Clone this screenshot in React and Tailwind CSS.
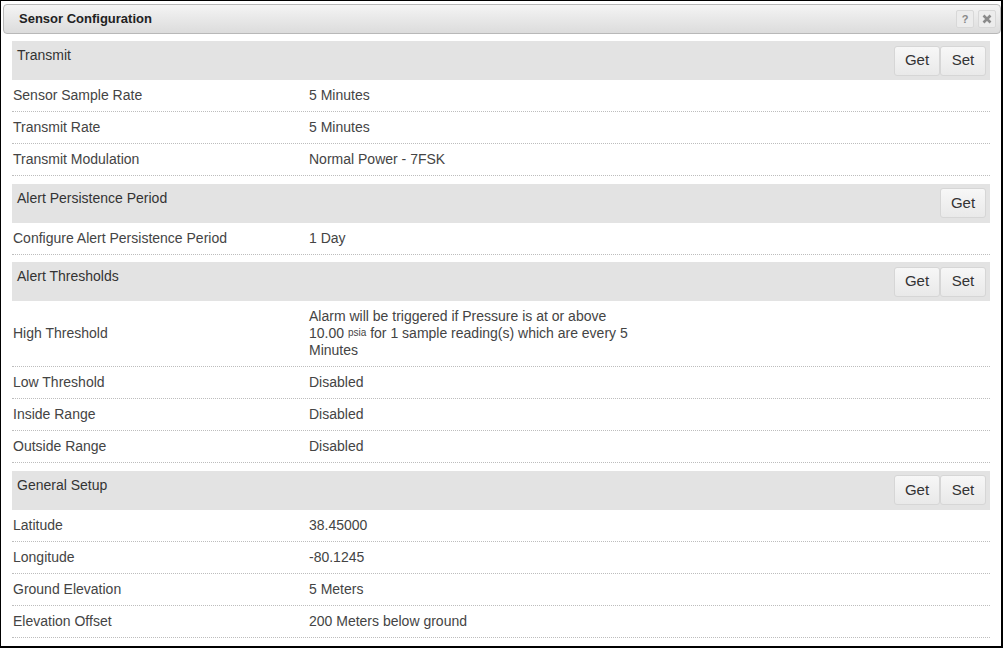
import React from "react";

const sections = [
  {
    title: "Transmit",
    actions: ["Get", "Set"],
    rows: [
      ["Sensor Sample Rate", "5 Minutes"],
      ["Transmit Rate", "5 Minutes"],
      ["Transmit Modulation", "Normal Power - 7FSK"],
    ],
  },
  {
    title: "Alert Persistence Period",
    actions: ["Get"],
    rows: [["Configure Alert Persistence Period", "1 Day"]],
  },
  {
    title: "Alert Thresholds",
    actions: ["Get", "Set"],
    rows: [
      [
        "High Threshold",
        <>
          Alarm will be triggered if Pressure is at or above 10.00{" "}
          <span className="align-[2px] text-[10px] leading-none">psia</span> for 1 sample
          reading(s) which are every 5 Minutes
        </>,
      ],
      ["Low Threshold", "Disabled"],
      ["Inside Range", "Disabled"],
      ["Outside Range", "Disabled"],
    ],
  },
  {
    title: "General Setup",
    actions: ["Get", "Set"],
    rows: [
      ["Latitude", "38.45000"],
      ["Longitude", "-80.1245"],
      ["Ground Elevation", "5 Meters"],
      ["Elevation Offset", "200 Meters below ground"],
    ],
  },
];

function Btn({ children }) {
  return (
    <button className="h-[30px] w-[46px] rounded-[3px] border border-[#d6d6d6] bg-gradient-to-b from-[#f7f7f7] to-[#e9e9e9] text-[15px] text-[#333]">
      {children}
    </button>
  );
}

export default function App() {
  return (
    <div
      className="h-[648px] w-[1003px] border-t border-l border-r-2 border-b-2 border-black bg-white pt-[3px] pl-[2px] pr-0 text-[14px] text-[#444]"
      style={{ fontFamily: '"Liberation Sans", Arial, sans-serif' }}
    >
      {/* title bar */}
      <div className="flex h-[30px] items-center justify-between rounded-[4px] border border-[#b8b8b8] bg-gradient-to-b from-[#f4f4f4] to-[#dcdcdc] pl-[15px] pr-[4px]">
        <span className="text-[13px] font-bold text-[#222]">Sensor Configuration</span>
        <div className="flex gap-[4px]">
          <span className="flex h-[18px] w-[18px] items-center justify-center rounded-[2px] border border-[#d8d8d8] bg-[#ececec] text-[11px] font-bold text-[#888]">
            ?
          </span>
          <span className="flex h-[18px] w-[18px] items-center justify-center rounded-[2px] border border-[#d8d8d8] bg-[#ececec] text-[#888]">
            <svg width="10" height="10" viewBox="0 0 10 10">
              <path d="M1.5 1.5 L8.5 8.5 M8.5 1.5 L1.5 8.5" stroke="#8a8a8a" strokeWidth="2.6" />
            </svg>
          </span>
        </div>
      </div>

      <div className="pl-[9px] pr-[11px] pt-[7px]">
        {sections.map((s, i) => (
          <div key={s.title} className={i > 0 ? "mt-[7.5px]" : ""}>
            <div className="flex h-[39px] justify-between bg-[#e3e3e3] pl-[5px] pr-[4px]">
              <span className="pt-[6px] text-[14px] leading-[17px] text-[#333]">{s.title}</span>
              <div className="flex items-center">
                {s.actions.map((a) => (
                  <Btn key={a}>{a}</Btn>
                ))}
              </div>
            </div>
            {s.rows.map(([label, value]) => (
              <div
                key={label}
                className="flex items-center border-b border-dotted border-[#bdbdbd] py-[7px] leading-[17px]"
              >
                <div className="w-[297px] shrink-0 pl-px">{label}</div>
                <div className="w-[335px]">{value}</div>
              </div>
            ))}
          </div>
        ))}
      </div>
    </div>
  );
}
